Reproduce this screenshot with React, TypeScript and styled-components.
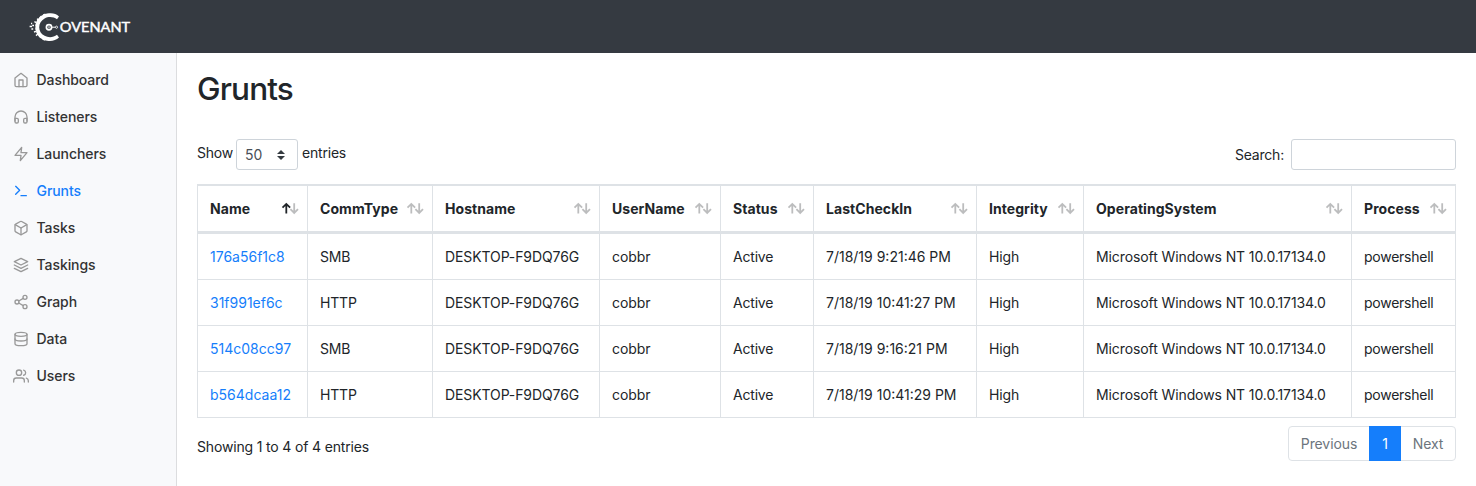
import React from "react";
import styled, { createGlobalStyle } from "styled-components";
import type { IconType } from "react-icons";
import {
  FiHome,
  FiHeadphones,
  FiZap,
  FiTerminal,
  FiBox,
  FiLayers,
  FiShare2,
  FiDatabase,
  FiUsers,
} from "react-icons/fi";

const GlobalStyle = createGlobalStyle`
  *, *::before, *::after { box-sizing: border-box; }
  body {
    margin: 0;
    background: #fff;
    color: #212529;
    font-family: Inter, "Liberation Sans", sans-serif;
    font-size: 14px;
    line-height: 21px;
    overflow: hidden;
  }
`;

const Page = styled.div`
  display: flex;
  flex-direction: column;
  height: 486px;
`;

const Navbar = styled.header`
  flex: none;
  height: 53px;
  background: #353a41;
  padding-left: 28px;
  display: flex;
  align-items: center;
`;

const Body = styled.div`
  flex: 1;
  display: flex;
`;

const Sidebar = styled.nav`
  width: 177px;
  flex: none;
  background: #f8f9fb;
  border-right: 1px solid #dcdddf;
  padding-top: 8px;
`;

const NavLink = styled.a<{ $active?: boolean }>`
  display: flex;
  align-items: center;
  height: 37px;
  padding-left: 13px;
  gap: 7.5px;
  font-weight: 500;
  letter-spacing: -0.07px;
  color: ${(p) => (p.$active ? "#157efb" : "#333")};
  svg {
    width: 16px;
    height: 16px;
    color: ${(p) => (p.$active ? "#157efb" : "#999")};
  }
`;

const Main = styled.main`
  flex: 1;
  padding: 16px 20px 0;
`;

const Title = styled.h1`
  margin: 0;
  height: 40px;
  font-size: 31.5px;
  line-height: 40px;
  font-weight: 500;
  letter-spacing: -0.85px;
`;

const Controls = styled.div`
  display: flex;
  justify-content: space-between;
  margin-top: 30px;
  height: 31px;
`;

const ControlLabel = styled.label<{ $gap: number }>`
  display: flex;
  align-items: center;
  gap: ${(p) => p.$gap}px;
  letter-spacing: -0.2px;
`;

const LengthText = styled.span<{ $width?: number }>`
  width: ${(p) => (p.$width ? `${p.$width}px` : "auto")};
  padding-bottom: 4px;
`;

const LengthSelect = styled.span`
  display: flex;
  align-items: center;
  justify-content: space-between;
  width: 62px;
  height: 31px;
  padding: 0 12px 0 8px;
  border: 1px solid #ced4da;
  border-radius: 3px;
  color: #495057;
  letter-spacing: 0;
`;

const SearchInput = styled.input`
  width: 165px;
  height: 31px;
  border: 1px solid #ced4da;
  border-radius: 3px;
  background: #fff;
`;

const Table = styled.table`
  width: 1259px;
  margin-top: 14px;
  table-layout: fixed;
  border-collapse: separate;
  border-spacing: 0;
  border-right: 1px solid #dee2e6;
`;

const HeadCell = styled.th`
  height: 50px;
  padding: 0 8px 0 12px;
  border-left: 1px solid #dee2e6;
  border-top: 2px solid #dee2e6;
  border-bottom: 3px solid #dee2e6;
  text-align: left;
  font-weight: 700;
  letter-spacing: 0.06px;
`;

const HeadContent = styled.div`
  display: flex;
  justify-content: space-between;
  align-items: center;
  white-space: nowrap;
`;

const Cell = styled.td<{ $tracking?: number }>`
  height: 46px;
  padding: 0 0 0 12px;
  border-left: 1px solid #dee2e6;
  border-bottom: 1px solid #dee2e6;
  white-space: nowrap;
  letter-spacing: ${(p) => p.$tracking ?? 0}px;
`;

const GruntLink = styled.a`
  color: #157efb;
`;

const Footer = styled.div`
  display: flex;
  justify-content: space-between;
  align-items: flex-start;
  margin-top: 8px;
`;

const Info = styled.div`
  padding-top: 10px;
  letter-spacing: -0.16px;
`;

const Pagination = styled.div`
  display: flex;
  height: 35px;
  border: 1px solid #dee2e6;
  border-radius: 4px;
`;

const PageButton = styled.span<{ $active?: boolean; $width: number }>`
  display: flex;
  align-items: center;
  justify-content: center;
  width: ${(p) => p.$width}px;
  margin: ${(p) => (p.$active ? "-1px 0" : "0")};
  letter-spacing: -0.1px;
  color: ${(p) => (p.$active ? "#fff" : "#6c757d")};
  background: ${(p) => (p.$active ? "#157efb" : "transparent")};
`;

const Logo = () => (
  <svg width="104" height="32" viewBox="28 10 104 32" fill="none" stroke="#fff">
    <path
      d="M59 15.4C56 12.2 51.5 11.6 47 12.6C40 14 35.4 19.5 35.4 26.2C35.4 33 40 38.6 47 39.8C51.5 40.6 56 39.6 59 36.6L57 33.8C53.5 36.6 48.5 37 44.6 34.8C41 32.8 39.2 29.8 39.2 26.2C39.2 22.4 41.2 19.4 44.6 17.4C48.5 15.2 53.5 15.6 57 18.2Z"
      fill="#fff"
      stroke="none"
    />
    <path d="M45.5 13.2A13.6 13.6 0 0 0 45.5 39" strokeWidth="1.6" strokeDasharray="2.6 1.8" />
    <path d="M37.2 17.6l1.6 2.2M34.4 20.6l2 1M32.2 24.5h1.8M29.6 25.6h2.4M31.4 28h1.8M34 31l2-.6M36 34.6l1.8-1.6M31 22.6h1.2" strokeWidth="1.5" />
    <circle cx="49" cy="26.2" r="2.6" strokeWidth="1.7" />
    <path d="M49 25.2v2.2" strokeWidth="1" />
    <path d="M51.8 26.2h3.4" strokeWidth="1" />
    <circle cx="56.5" cy="26.2" r="1.1" strokeWidth="0.8" />
    <text
      x="59.8"
      y="31"
      textLength="70.4"
      lengthAdjust="spacingAndGlyphs"
      fill="#fff"
      strokeWidth="0.45"
      fontFamily="Lato, sans-serif"
      fontWeight="400"
      fontSize="14.2"
    >
      OVENANT
    </text>
  </svg>
);

const SortIcon = ({ ascending }: { ascending?: boolean }) => (
  <svg width="18" height="14" viewBox="0 0 18 14" fill="none" stroke="#212529" strokeWidth="1.8">
    <path d="M5.3 11.6V2M1.5 5.7L5.3 1.9L9.1 5.7" opacity={ascending ? 1 : 0.3} />
    <path d="M13.2 1.2V10.8M9.4 7.1L13.2 10.9L17 7.1" opacity={0.3} />
  </svg>
);

const SelectCaret = () => (
  <svg width="8" height="10" viewBox="0 0 8 10" fill="#343a40">
    <path d="M4 0L8 4H0zM4 10L0 6h8z" />
  </svg>
);

const links: { label: string; icon: IconType }[] = [
  { label: "Dashboard", icon: FiHome },
  { label: "Listeners", icon: FiHeadphones },
  { label: "Launchers", icon: FiZap },
  { label: "Grunts", icon: FiTerminal },
  { label: "Tasks", icon: FiBox },
  { label: "Taskings", icon: FiLayers },
  { label: "Graph", icon: FiShare2 },
  { label: "Data", icon: FiDatabase },
  { label: "Users", icon: FiUsers },
];

const columns = [
  { label: "Name", width: 110 },
  { label: "CommType", width: 125 },
  { label: "Hostname", width: 167 },
  { label: "UserName", width: 121 },
  { label: "Status", width: 93 },
  { label: "LastCheckIn", width: 163 },
  { label: "Integrity", width: 107 },
  { label: "OperatingSystem", width: 268 },
  { label: "Process", width: 104 },
];

const grunts = [
  { name: "176a56f1c8", comm: "SMB", checkIn: "7/18/19 9:21:46 PM" },
  { name: "31f991ef6c", comm: "HTTP", checkIn: "7/18/19 10:41:27 PM" },
  { name: "514c08cc97", comm: "SMB", checkIn: "7/18/19 9:16:21 PM" },
  { name: "b564dcaa12", comm: "HTTP", checkIn: "7/18/19 10:41:29 PM" },
];

export default function App() {
  return (
    <Page>
      <GlobalStyle />
      <Navbar>
        <Logo />
      </Navbar>
      <Body>
        <Sidebar>
          {links.map(({ label, icon: Icon }) => (
            <NavLink key={label} $active={label === "Grunts"}>
              <Icon />
              {label}
            </NavLink>
          ))}
        </Sidebar>
        <Main>
          <Title>Grunts</Title>
          <Controls>
            <ControlLabel $gap={4}>
              <LengthText $width={35}>Show</LengthText>
              <LengthSelect>
                50
                <SelectCaret />
              </LengthSelect>
              <LengthText>entries</LengthText>
            </ControlLabel>
            <ControlLabel $gap={7}>
              Search:
              <SearchInput />
            </ControlLabel>
          </Controls>
          <Table>
            <colgroup>
              {columns.map((c) => (
                <col key={c.label} style={{ width: c.width }} />
              ))}
            </colgroup>
            <thead>
              <tr>
                {columns.map((c) => (
                  <HeadCell key={c.label}>
                    <HeadContent>
                      {c.label}
                      <SortIcon ascending={c.label === "Name"} />
                    </HeadContent>
                  </HeadCell>
                ))}
              </tr>
            </thead>
            <tbody>
              {grunts.map((g) => (
                <tr key={g.name}>
                  <Cell>
                    <GruntLink>{g.name}</GruntLink>
                  </Cell>
                  <Cell $tracking={-0.2}>{g.comm}</Cell>
                  <Cell $tracking={-0.1}>DESKTOP-F9DQ76G</Cell>
                  <Cell $tracking={-0.1}>cobbr</Cell>
                  <Cell $tracking={-0.2}>Active</Cell>
                  <Cell>{g.checkIn}</Cell>
                  <Cell $tracking={-0.1}>High</Cell>
                  <Cell $tracking={-0.1}>Microsoft Windows NT 10.0.17134.0</Cell>
                  <Cell $tracking={-0.25}>powershell</Cell>
                </tr>
              ))}
            </tbody>
          </Table>
          <Footer>
            <Info>Showing 1 to 4 of 4 entries</Info>
            <Pagination>
              <PageButton $width={80}>Previous</PageButton>
              <PageButton $width={32} $active>
                1
              </PageButton>
              <PageButton $width={54}>Next</PageButton>
            </Pagination>
          </Footer>
        </Main>
      </Body>
    </Page>
  );
}
